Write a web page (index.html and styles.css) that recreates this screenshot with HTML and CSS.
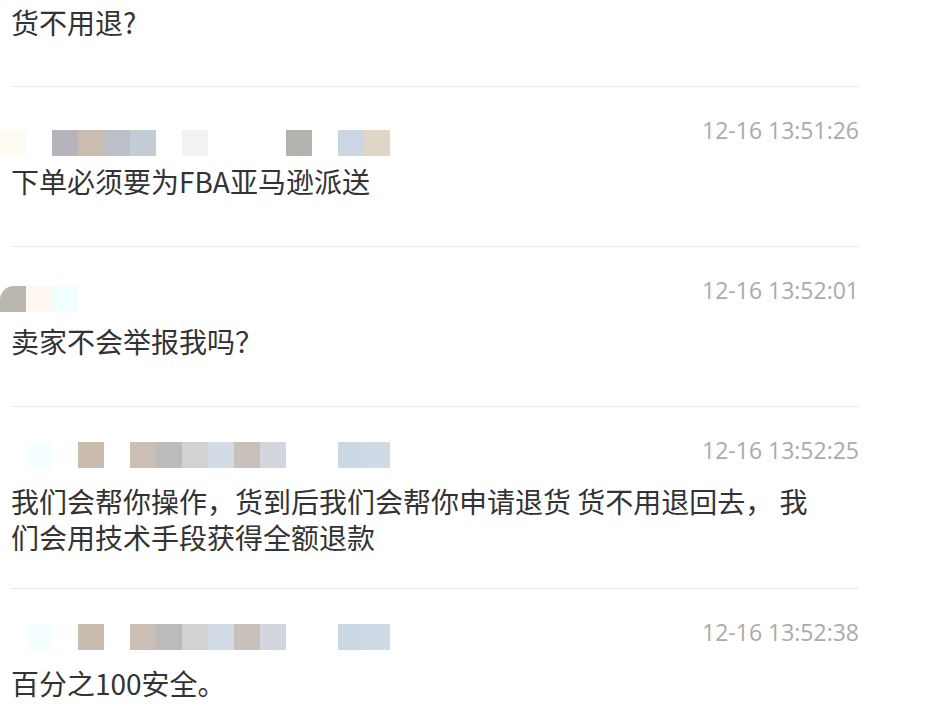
FILE: index.html
```html
<!DOCTYPE html>
<html lang="zh-CN">
<head>
<meta charset="utf-8">
<title>留言</title>
<link rel="stylesheet" href="styles.css">
</head>
<body>
<div class="list">
  <div class="item first">
    <p class="msg">货不用退?</p>
  </div>

  <div class="item">
    <div class="head">
      <div class="mosaic m15">
        <span class="c c-fdfbf2"></span><span class="c e"></span><span class="c c-b6b3bc"></span><span class="c c-cbbcb0"></span><span class="c c-bdbfc8"></span><span class="c c-c2cdd6"></span><span class="c e"></span><span class="c c-f2f2f2"></span><span class="c e"></span><span class="c e"></span><span class="c e"></span><span class="c c-b3b3ae"></span><span class="c e"></span><span class="c c-cbd6e3"></span><span class="c c-e0d6c5"></span>
      </div>
      <span class="time">12-16 13:51:26</span>
    </div>
    <p class="msg">下单必须要为FBA亚马逊派送</p>
  </div>

  <div class="item">
    <div class="head">
      <div class="mosaic m11">
        <span class="c c-bab6b0 round"></span><span class="c c-fff8f0"></span><span class="c c-f0ffff"></span>
      </div>
      <span class="time">12-16 13:52:01</span>
    </div>
    <p class="msg">卖家不会举报我吗？</p>
  </div>

  <div class="item">
    <div class="head">
      <div class="mosaic m7">
        <span class="c e"></span><span class="c c-f5ffff"></span><span class="c e"></span><span class="c c-cabbaf"></span><span class="c e"></span><span class="c c-cbbeb4"></span><span class="c c-bbbbbb"></span><span class="c c-d2d2d2"></span><span class="c c-d3dbe5"></span><span class="c c-c8c0ba"></span><span class="c c-d2d7df"></span><span class="c e"></span><span class="c e"></span><span class="c c-cdd8e5"></span><span class="c c-cfdae6"></span>
      </div>
      <span class="time">12-16 13:52:25</span>
    </div>
    <p class="msg">我们会帮你操作，货到后我们会帮你申请退货 货不用退回去， 我们会用技术手段获得全额退款</p>
  </div>

  <div class="item last">
    <div class="head">
      <div class="mosaic m7">
        <span class="c e"></span><span class="c c-f5ffff"></span><span class="c e"></span><span class="c c-cabbaf"></span><span class="c e"></span><span class="c c-cbbeb4"></span><span class="c c-bbbbbb"></span><span class="c c-d2d2d2"></span><span class="c c-d3dbe5"></span><span class="c c-c8c0ba"></span><span class="c c-d2d7df"></span><span class="c e"></span><span class="c e"></span><span class="c c-cdd8e5"></span><span class="c c-cfdae6"></span>
      </div>
      <span class="time">12-16 13:52:38</span>
    </div>
    <p class="msg">百分之100安全。</p>
  </div>
</div>
</body>
</html>
```

FILE: styles.css
```css
html, body {
  margin: 0;
  padding: 0;
  background: #ffffff;
}

body {
  font-family: "Noto Sans CJK SC", "Noto Sans", sans-serif;
  color: #333333;
}

.list {
  width: 848px;
  margin-left: 11px;
}

.item {
  border-bottom: 1px solid #e9e9e9;
  padding-top: 28px;
  padding-bottom: 33px;
}

.item.first {
  padding-top: 4px;
  padding-bottom: 32px;
}

.item.last {
  border-bottom: none;
}

.head {
  height: 30px;
  display: flex;
  justify-content: space-between;
  align-items: flex-start;
  margin-left: -11px;
}

.mosaic {
  display: flex;
  height: 26px;
}

.m15 { margin-top: 15px; }
.m11 { margin-top: 11px; }
.m7 { margin-top: 7px; }

.c {
  width: 26px;
  height: 26px;
  display: block;
}

.c.round { border-top-left-radius: 14px; }

.e { background: transparent; }
.c-fdfbf2 { background: #fdfbf2; }
.c-b6b3bc { background: #b6b3bc; }
.c-cbbcb0 { background: #cbbcb0; }
.c-bdbfc8 { background: #bdbfc8; }
.c-c2cdd6 { background: #c2cdd6; }
.c-f2f2f2 { background: #f2f2f2; }
.c-b3b3ae { background: #b3b3ae; }
.c-cbd6e3 { background: #cbd6e3; }
.c-e0d6c5 { background: #e0d6c5; }
.c-bab6b0 { background: #bab6b0; }
.c-fff8f0 { background: #fff8f0; }
.c-f0ffff { background: #f0ffff; }
.c-f5ffff { background: #f5ffff; }
.c-cabbaf { background: #cabbaf; }
.c-cbbeb4 { background: #cbbeb4; }
.c-bbbbbb { background: #bbbbbb; }
.c-d2d2d2 { background: #d2d2d2; }
.c-d3dbe5 { background: #d3dbe5; }
.c-c8c0ba { background: #c8c0ba; }
.c-d2d7df { background: #d2d7df; }
.c-cdd8e5 { background: #cdd8e5; }
.c-cfdae6 { background: #cfdae6; }

.time {
  font-family: "Open Sans", "Noto Sans", sans-serif;
  font-size: 23px;
  line-height: 30px;
  color: #ababab;
}

.msg {
  margin: 18px 0 0 0;
  font-size: 28px;
  line-height: 36px;
  min-height: 50px;
  padding-right: 40px;
}

.item.first .msg {
  margin-top: 0;
}
```
